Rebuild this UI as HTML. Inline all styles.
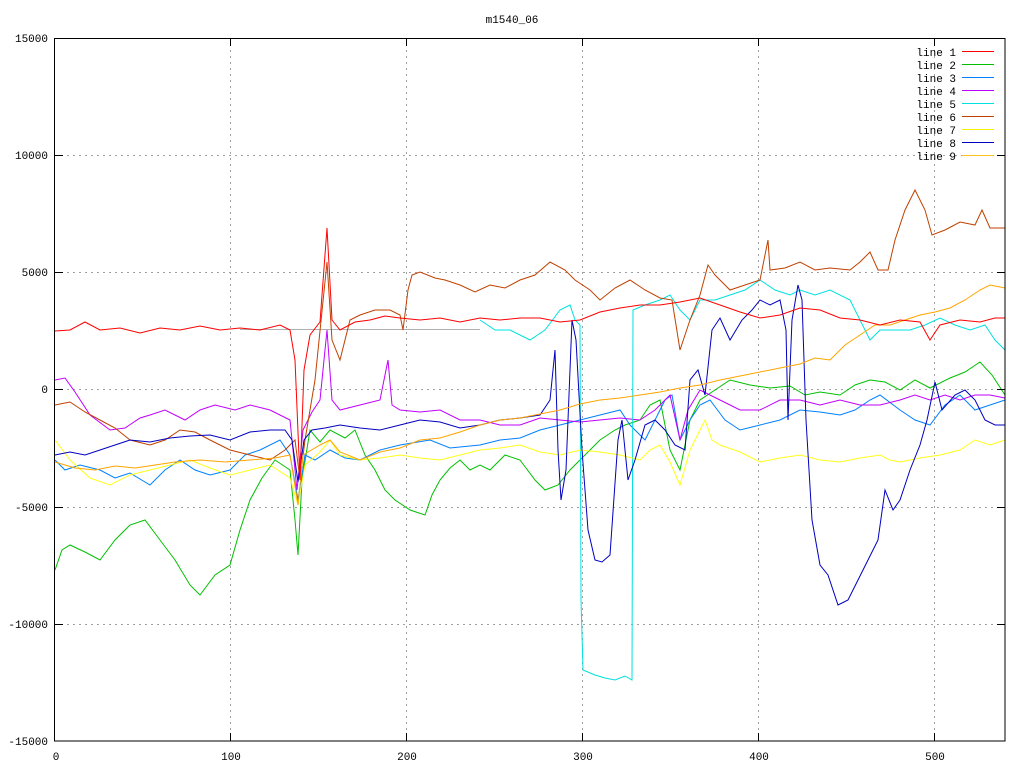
<!DOCTYPE html>
<html><head><style>
html,body{margin:0;padding:0;background:#fff;width:1024px;height:768px;overflow:hidden}
svg{display:block}
text{font-family:"Liberation Mono","DejaVu Sans Mono",monospace;font-size:11px;fill:#000}
polyline{fill:none;stroke-width:1}
</style></head><body>
<svg width="1024" height="768" viewBox="0 0 1024 768" xmlns="http://www.w3.org/2000/svg">
<g stroke="#a0a0a0" stroke-dasharray="2,4" stroke-width="1">
<line x1="55" y1="155.5" x2="1005" y2="155.5"/>
<line x1="55" y1="272.5" x2="1005" y2="272.5"/>
<line x1="55" y1="389.5" x2="1005" y2="389.5"/>
<line x1="55" y1="507.5" x2="1005" y2="507.5"/>
<line x1="55" y1="624.5" x2="1005" y2="624.5"/>
<line x1="230.5" y1="38" x2="230.5" y2="741"/>
<line x1="406.5" y1="38" x2="406.5" y2="741"/>
<line x1="582.5" y1="38" x2="582.5" y2="741"/>
<line x1="758.5" y1="38" x2="758.5" y2="741"/>
<line x1="934.5" y1="38" x2="934.5" y2="741"/>
</g>
<line x1="240" y1="329.5" x2="480" y2="329.5" stroke="#b0b0b0"/>
<polyline stroke="#00c000" points="55,570 62,550 70,545 85,552 100,560 115,540 130,525 145,520 160,540 175,560 190,585 200,595 215,575 230,565 240,530 250,500 262,478 275,460 290,470 295,520 298,555 302,480 310,430 320,442 330,430 345,438 355,430 365,455 375,470 385,490 395,500 410,510 425,515 432,495 440,480 450,468 460,460 470,470 480,465 490,470 505,455 520,460 535,480 545,490 558,485 570,470 585,455 600,440 615,430 625,425 640,420 650,405 660,400 670,450 680,470 690,420 700,400 715,390 730,380 750,385 770,388 790,386 805,395 820,392 840,395 855,385 870,380 885,382 900,390 915,380 930,388 950,378 965,372 980,362 992,375 1005,395"/>
<polyline stroke="#0080ff" points="55,460 65,470 80,465 100,470 115,478 130,473 150,485 165,470 180,460 195,470 210,475 230,470 245,455 260,450 280,440 290,455 298,500 305,455 315,460 330,450 345,458 360,460 380,450 400,445 430,440 450,448 480,445 500,440 520,438 540,430 560,425 580,420 600,415 620,410 630,425 645,440 655,420 665,400 672,395 680,440 690,420 700,405 710,400 725,420 740,430 760,425 780,420 800,410 820,412 840,415 855,410 870,400 880,395 900,410 915,420 930,425 945,405 960,395 975,410 990,405 1005,400"/>
<polyline stroke="#c000ff" points="55,380 65,378 75,392 90,415 110,430 125,428 140,418 150,415 165,410 185,420 200,410 215,405 235,410 250,405 270,410 290,420 297,490 303,430 312,412 320,400 327,330 332,400 340,410 360,405 380,400 388,360 392,405 400,410 420,412 440,410 460,420 480,420 500,425 520,425 540,418 560,420 580,422 600,420 620,418 640,420 655,410 670,395 680,440 688,410 700,390 720,400 740,410 760,410 780,400 800,400 820,405 840,400 860,405 880,405 900,400 915,395 930,400 945,395 960,400 975,395 990,395 1005,398"/>
<polyline stroke="#00e0e0" points="480,320 495,330 510,330 530,340 545,330 560,310 570,305 575,320 580,325 581,600 583,670 595,675 605,678 615,680 625,676 632,680 633,310 645,305 660,300 670,295 680,310 690,320 700,300 715,300 730,295 745,290 760,280 775,290 790,295 800,290 815,295 830,290 850,300 860,320 870,340 880,330 895,330 910,330 925,325 940,318 955,325 970,330 985,325 995,340 1005,350"/>
<polyline stroke="#c04000" points="55,405 70,402 85,412 100,420 115,428 130,440 150,445 165,440 180,430 195,432 210,440 230,450 250,455 270,460 285,450 295,440 300,480 305,440 315,380 327,262 332,340 340,360 345,340 350,320 360,315 375,310 390,310 400,315 403,330 408,290 412,275 420,272 435,278 445,280 460,285 475,292 490,285 505,288 520,280 535,275 550,262 565,270 575,280 590,290 600,300 615,288 630,280 645,290 660,298 672,300 680,350 690,320 700,295 708,265 715,275 730,290 745,285 760,280 768,240 770,270 785,268 800,262 815,270 830,268 850,270 860,262 870,252 878,270 888,270 895,240 905,210 915,190 925,210 932,235 945,230 960,222 975,225 982,210 990,228 1005,228"/>
<polyline stroke="#ffff00" stroke-opacity="0.9" points="55,440 70,460 90,478 110,485 130,475 150,470 170,465 190,460 210,468 230,475 250,470 270,465 290,478 298,505 305,465 320,452 330,440 340,455 360,460 380,458 400,455 420,458 440,460 460,455 480,450 500,448 520,445 540,452 560,455 580,450 600,452 620,455 640,460 650,450 660,445 670,462 680,485 690,450 700,430 705,420 712,440 720,445 740,452 760,462 780,458 800,455 820,460 840,462 860,458 880,455 890,460 900,462 920,458 940,455 960,450 975,440 990,445 1005,440"/>
<polyline stroke="#0000c0" points="55,455 70,452 85,455 100,450 115,445 130,440 150,442 170,438 190,436 210,435 230,440 250,432 270,430 285,430 292,440 298,482 304,440 312,430 325,428 340,425 360,428 380,430 400,425 420,420 440,422 460,428 480,425 500,420 520,418 540,415 550,400 555,350 558,450 561,500 566,470 572,320 576,340 582,450 588,530 595,560 602,562 610,555 618,440 622,420 628,480 635,460 645,425 655,420 665,430 675,445 685,450 690,380 698,370 705,395 712,330 720,318 730,340 742,320 752,310 760,300 770,305 780,300 786,330 788,420 792,320 798,285 802,300 806,420 812,520 820,565 828,575 838,605 848,600 858,580 868,560 878,540 885,490 893,510 900,500 910,470 920,445 927,420 935,382 942,410 955,395 965,390 975,400 985,420 995,425 1005,425"/>
<polyline stroke="#ffa500" points="55,462 75,468 95,470 115,466 135,468 155,465 175,462 200,460 225,462 250,460 275,458 290,455 298,505 303,455 320,445 330,440 340,452 360,460 380,452 400,448 420,440 440,438 460,432 480,425 500,420 520,418 540,414 560,410 580,404 600,400 620,398 640,395 660,392 680,388 700,385 720,380 740,376 760,372 780,368 800,364 815,358 830,360 845,345 860,335 875,325 890,325 905,320 920,315 935,312 950,308 965,300 980,290 990,285 1005,288"/>
<polyline stroke="#ff0000" points="55,331 70,330 85,322 100,330 120,328 140,333 160,328 180,330 200,326 220,330 240,328 260,330 280,325 290,330 295,360 300,480 304,370 310,335 320,322 327,228 332,320 340,330 355,322 370,320 385,316 400,318 420,320 440,318 460,322 480,318 500,320 520,318 540,318 560,322 580,320 600,312 620,308 640,305 660,305 680,302 700,298 720,305 740,312 760,318 780,315 800,308 820,310 840,318 860,320 880,325 900,320 920,322 930,340 940,325 960,320 980,322 995,318 1005,318"/>
<rect x="54.5" y="38.5" width="950.5" height="702.5" fill="none" stroke="#000" stroke-width="1"/>
<g stroke="#000">
<line x1="230.5" y1="741" x2="230.5" y2="733"/><line x1="406.5" y1="741" x2="406.5" y2="733"/><line x1="582.5" y1="741" x2="582.5" y2="733"/><line x1="758.5" y1="741" x2="758.5" y2="733"/><line x1="934.5" y1="741" x2="934.5" y2="733"/>
<line x1="230.5" y1="38" x2="230.5" y2="46"/><line x1="406.5" y1="38" x2="406.5" y2="46"/><line x1="582.5" y1="38" x2="582.5" y2="46"/><line x1="758.5" y1="38" x2="758.5" y2="46"/><line x1="934.5" y1="38" x2="934.5" y2="46"/>
<line x1="55" y1="155.5" x2="63" y2="155.5"/><line x1="55" y1="272.5" x2="63" y2="272.5"/><line x1="55" y1="389.5" x2="63" y2="389.5"/><line x1="55" y1="507.5" x2="63" y2="507.5"/><line x1="55" y1="624.5" x2="63" y2="624.5"/>
<line x1="1005" y1="155.5" x2="997" y2="155.5"/><line x1="1005" y1="272.5" x2="997" y2="272.5"/><line x1="1005" y1="389.5" x2="997" y2="389.5"/><line x1="1005" y1="507.5" x2="997" y2="507.5"/><line x1="1005" y1="624.5" x2="997" y2="624.5"/>
</g>
<text x="512" y="23" text-anchor="middle">m1540_06</text>
<g text-anchor="end">
<text x="48" y="42">15000</text><text x="48" y="159">10000</text><text x="48" y="276">5000</text><text x="48" y="393">0</text><text x="48" y="511">-5000</text><text x="48" y="628">-10000</text><text x="48" y="745">-15000</text>
</g>
<g text-anchor="middle">
<text x="56" y="760">0</text><text x="231" y="760">100</text><text x="407" y="760">200</text><text x="583" y="760">300</text><text x="759" y="760">400</text><text x="935" y="760">500</text>
</g>
<g text-anchor="end">
<text x="956" y="56">line 1</text><text x="956" y="69">line 2</text><text x="956" y="82">line 3</text><text x="956" y="95">line 4</text><text x="956" y="108">line 5</text><text x="956" y="121">line 6</text><text x="956" y="134">line 7</text><text x="956" y="147">line 8</text><text x="956" y="160">line 9</text>
</g>
<g stroke-width="1">
<line x1="962" y1="51.5" x2="994" y2="51.5" stroke="#ff0000"/>
<line x1="962" y1="64.5" x2="994" y2="64.5" stroke="#00c000"/>
<line x1="962" y1="77.5" x2="994" y2="77.5" stroke="#0080ff"/>
<line x1="962" y1="90.5" x2="994" y2="90.5" stroke="#c000ff"/>
<line x1="962" y1="103.5" x2="994" y2="103.5" stroke="#00e0e0"/>
<line x1="962" y1="116.5" x2="994" y2="116.5" stroke="#c04000"/>
<line x1="962" y1="129.5" x2="994" y2="129.5" stroke="#f0f000"/>
<line x1="962" y1="142.5" x2="994" y2="142.5" stroke="#0000c0"/>
<line x1="962" y1="155.5" x2="994" y2="155.5" stroke="#ffc020"/>
</g>
</svg>
</body></html>
